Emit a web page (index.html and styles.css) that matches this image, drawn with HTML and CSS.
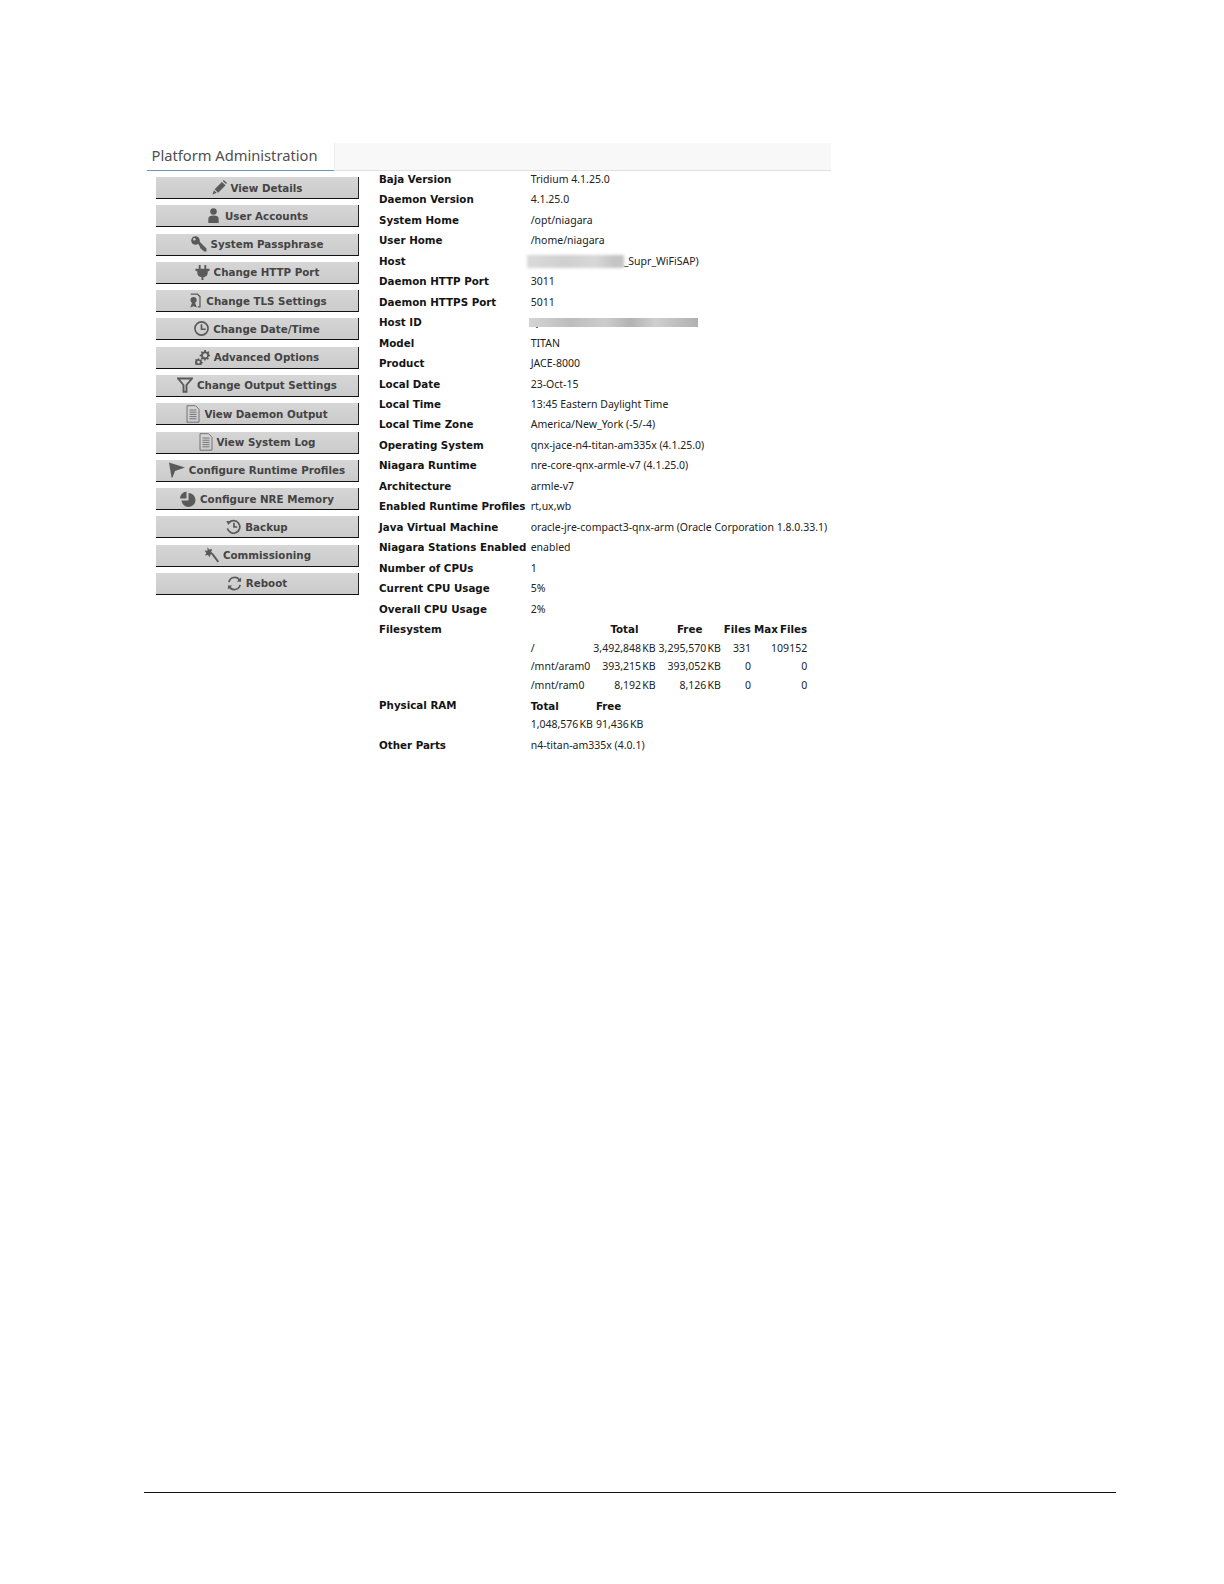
FILE: index.html
```html
<!DOCTYPE html>
<html lang="en">
<head>
<meta charset="utf-8">
<title>Platform Administration</title>
<link rel="stylesheet" href="styles.css">
</head>
<body>
<main class="panel">
  <header class="tabbar">
    <h1 class="tab">Platform Administration</h1>
    <div class="tabfill"></div>
  </header>
  <div class="content">
    <nav class="side">
      <a class="btn"><svg class="ico" viewBox="0 0 16 16"><path d="M.5 15.500l1.500-4.500 3 2.500z"/><path d="M2.800 9.800L10.500 2l4 3.500L6.500 13.500z"/><path d="M11.500 1l1-1 3.500 3.200-1 1z"/></svg>View Details</a>
      <a class="btn"><svg class="ico" viewBox="0 0 16 16"><circle cx="8" cy="3.800" r="3.500"/><path d="M2.500 16v-4.500C2.500 9 4.500 8 8 8s5.500 1 5.500 3.500V16z"/></svg>User Accounts</a>
      <a class="btn"><svg class="ico ico-wide" viewBox="0 0 16 16"><circle cx="4.500" cy="4.500" r="4.300"/><path d="M6.500 6.500l1.500-1.500 7.500 7.500V15.500H13l-1-1.200-1.200-.3-.3-1.200-1.200-.3-.3-1.500z"/><circle cx="3.300" cy="3.300" r="1.200" fill="#d0d0d0"/></svg>System Passphrase</a>
      <a class="btn"><svg class="ico" viewBox="0 0 16 16"><path d="M4 0h2v4h4V0h2v4h3.500v2L13.500 7v2.500l-1.500 2.500-3 1v3H7v-3l-3-1-1.500-2.500V7L.5 6V4H4z"/></svg>Change HTTP Port</a>
      <a class="btn"><svg class="ico" viewBox="0 0 16 16"><path d="M4 .5h7.500l3 3V15.500h-3v-1.300h1.700V4.200l-2.400-2.400H4z"/><circle cx="7" cy="7.500" r="3.300"/><path d="M3.500 15.500L5.500 10h3l2 5.500L7 14z"/></svg>Change TLS Settings</a>
      <a class="btn"><svg class="ico ico-line" viewBox="0 0 16 16"><circle cx="8" cy="8" r="7"/><path d="M8 3.500V8.800H12.500"/></svg>Change Date/Time</a>
      <a class="btn"><svg class="ico" viewBox="0 0 16 16"><path fill-rule="evenodd" d="M10 0h1.600l.3 1.500 1.200.5 1.300-.8 1 1-.8 1.300.4 1.200 1 .3v1.600l-1.500.3-.5 1.200.8 1.300-1 1-1.300-.8-1.100.4-.3 1.500H10l-.4-1.500-1.100-.4-1.300.8-1-1 .8-1.300-.5-1.200L5 6.600V5l1.500-.3.500-1.200-.8-1.300 1-1 1.300.8 1.100-.5zM10.800 3.500a2.300 2.300 0 1 0 0 4.600 2.300 2.300 0 0 0 0-4.600z"/><path fill-rule="evenodd" d="M3 9h1.500l.2 1 .9.400.9-.5.9.9-.5.900.4.900 1 .2v1.400l-1 .2-.4.900.5.800-1 .9-.8-.5-.9.400-.2 1H3l-.2-1-.9-.4-.8.500-1-.9.5-.8-.4-.9-1-.2V12.400l1-.2.4-.9-.5-.9.900-.9.900.5.900-.4zM3.800 11.500a1.500 1.500 0 1 0 0 3 1.500 1.500 0 0 0 0-3z"/></svg>Advanced Options</a>
      <a class="btn"><svg class="ico ico-line ico-funnel" viewBox="0 0 16 16"><path d="M1 1.500h14L9.500 8v6.800H6.500V8z"/></svg>Change Output Settings</a>
      <a class="btn"><svg class="ico ico-doc" viewBox="0 0 14 18"><path d="M1 .7h8.500l3.500 3.500v13H1z"/><path d="M3.500 5h7M3.500 7.200h7M3.500 9.400h7M3.500 11.600h7M3.500 13.800h7"/></svg>View Daemon Output</a>
      <a class="btn"><svg class="ico ico-doc" viewBox="0 0 14 18"><path d="M1 .7h8.500l3.500 3.500v13H1z"/><path d="M3.500 5h7M3.500 7.200h7M3.500 9.400h7M3.500 11.600h7M3.500 13.800h7"/></svg>View System Log</a>
      <a class="btn"><svg class="ico ico-wide" viewBox="0 0 16 16"><path d="M0 .5l16 5-10 3.500-2.500 6.500H2.500z"/></svg>Configure Runtime Profiles</a>
      <a class="btn"><svg class="ico ico-wide" viewBox="0 0 16 16"><path d="M8.500 2a7 7 0 1 1-7 7.500h7zM6.500 .5v7H0A7 7 0 0 1 6.500 .5z"/></svg>Configure NRE Memory</a>
      <a class="btn"><svg class="ico ico-line" viewBox="0 0 16 16"><path d="M3 4A6.700 6.700 0 1 1 1.500 10"/><path d="M8.500 4v4.500H12"/><path class="solid" d="M.3 2l5.500.5-3.300 4z"/></svg>Backup</a>
      <a class="btn"><svg class="ico ico-wide" viewBox="0 0 16 16"><path d="M4.500 0l1.500 2.500L9 2l-.7 3 2 2-2.800.5-.8 2.700L5 8 2 8.500 3.300 6 1.500 3.500l3 .3z"/><path d="M8.500 7.500l1.500-1.200 6 8-1.400 1.200z"/></svg>Commissioning</a>
      <a class="btn"><svg class="ico ico-line" viewBox="0 0 16 16"><path d="M2 6.500A6.300 6.300 0 0 1 13.500 4.500"/><path d="M14 9.500A6.300 6.300 0 0 1 2.500 11.500"/><path class="solid" d="M15 1.500v4.500h-4.500zM1 14.500v-4.500h4.500z"/></svg>Reboot</a>
    </nav>
    <table class="details">
      <tbody>
        <tr><th>Baja Version</th><td>Tridium 4.1.25.0</td></tr>
        <tr><th>Daemon Version</th><td>4.1.25.0</td></tr>
        <tr><th>System Home</th><td>/opt/niagara</td></tr>
        <tr><th>User Home</th><td>/home/niagara</td></tr>
        <tr><th>Host</th><td><span class="blur-host"></span>_Supr_WiFiSAP)</td></tr>
        <tr><th>Daemon HTTP Port</th><td>3011</td></tr>
        <tr><th>Daemon HTTPS Port</th><td>5011</td></tr>
        <tr><th>Host ID</th><td><span class="redact">Q<span class="blur-id"></span></span></td></tr>
        <tr><th>Model</th><td>TITAN</td></tr>
        <tr><th>Product</th><td>JACE-8000</td></tr>
        <tr><th>Local Date</th><td>23-Oct-15</td></tr>
        <tr><th>Local Time</th><td>13:45 Eastern Daylight Time</td></tr>
        <tr><th>Local Time Zone</th><td>America/New_York (-5/-4)</td></tr>
        <tr><th>Operating System</th><td>qnx-jace-n4-titan-am335x (4.1.25.0)</td></tr>
        <tr><th>Niagara Runtime</th><td>nre-core-qnx-armle-v7 (4.1.25.0)</td></tr>
        <tr><th>Architecture</th><td>armle-v7</td></tr>
        <tr><th>Enabled Runtime Profiles</th><td>rt,ux,wb</td></tr>
        <tr><th>Java Virtual Machine</th><td>oracle-jre-compact3-qnx-arm (Oracle Corporation 1.8.0.33.1)</td></tr>
        <tr><th>Niagara Stations Enabled</th><td>enabled</td></tr>
        <tr><th>Number of CPUs</th><td>1</td></tr>
        <tr><th>Current CPU Usage</th><td>5%</td></tr>
        <tr><th>Overall CPU Usage</th><td>2%</td></tr>
        <tr class="nested-row"><th>Filesystem</th><td>
          <table class="inner fs">
            <tr><th></th><th>Total</th><th>Free</th><th>Files</th><th>Max Files</th></tr>
            <tr><td>/</td><td>3,492,848 KB</td><td>3,295,570 KB</td><td>331</td><td>109152</td></tr>
            <tr><td>/mnt/aram0</td><td>393,215 KB</td><td>393,052 KB</td><td>0</td><td>0</td></tr>
            <tr><td>/mnt/ram0</td><td>8,192 KB</td><td>8,126 KB</td><td>0</td><td>0</td></tr>
          </table>
        </td></tr>
        <tr class="nested-row"><th>Physical RAM</th><td>
          <table class="inner ram">
            <tr><th>Total</th><th>Free</th></tr>
            <tr><td>1,048,576 KB</td><td>91,436 KB</td></tr>
          </table>
        </td></tr>
        <tr><th>Other Parts</th><td>n4-titan-am335x (4.0.1)</td></tr>
      </tbody>
    </table>
  </div>
</main>
<footer class="rule"></footer>
</body>
</html>
```

FILE: styles.css
```css
* { box-sizing: border-box; }
html, body { margin: 0; padding: 0; background: #fff; }
body {
  min-height: 1584px;
  display: flex;
  flex-direction: column;
  padding: 143px 108px 91px 144px;
  font-family: "Noto Sans", "Open Sans", sans-serif;
  color: #1d1d1d;
}
.panel { margin-left: 3px; width: 684px; }
.tabbar { display: flex; height: 28px; }
.tab {
  width: 187px;
  margin: 0;
  padding: 2px 0 0 4.500px;
  font-size: 14.700px;
  font-weight: 400;
  line-height: 20px;
  color: #4f4f4f;
  border-bottom: 1px solid #6f93b5;
  white-space: nowrap;
}
.tabfill {
  flex: 1;
  background: #f8f8f8;
  border-bottom: 1px solid #e0e0e0;
  border-left: 1px solid #ededed;
}
.content { display: flex; align-items: flex-start; }
.side {
  width: 232px;
  flex: none;
  padding: 6px 0 0 9px;
  display: flex;
  flex-direction: column;
  gap: 6.290px;
}
.btn {
  width: 203px;
  height: 22px;
  display: flex;
  align-items: center;
  justify-content: center;
  gap: 4px;
  background: linear-gradient(#d6d6d6, #cbcbcb);
  border-right: 1px solid #222;
  border-bottom: 1px solid #111;
  font-family: "DejaVu Sans", sans-serif;
  font-weight: 700;
  font-size: 10.300px;
  color: #444;
  white-space: nowrap;
}
.ico { width: 15px; height: 15px; flex: none; fill: #5a5a5a; }
.ico-wide { width: 16px; height: 16px; }
.ico-line { fill: none; stroke: #5a5a5a; stroke-width: 1.800; }
.ico-line .solid { fill: #5a5a5a; stroke: none; }
.ico-funnel { width: 16px; height: 16px; stroke-width: 1.900; }
.ico-doc { width: 14px; height: 18px; fill: none; stroke: #757575; stroke-width: 1; }
.details { border-collapse: collapse; margin-top: -2.200px; }
.details > tbody > tr { height: 20.460px; }
.details th, .details td {
  padding: 0;
  text-align: left;
  vertical-align: middle;
  white-space: nowrap;
}
.details > tbody > tr > th {
  width: 151.700px;
  font-family: "DejaVu Sans", sans-serif;
  font-size: 10.300px;
  font-weight: 700;
  color: #141414;
}
.details td { font-size: 10.500px; color: #222; }
.details > tbody > .nested-row > th,
.details > tbody > .nested-row > td {
  vertical-align: top;
  padding-top: .8px;
  padding-bottom: 1.200px;
}
.details > tbody > .nested-row > th { line-height: 18.670px; }
.inner { border-collapse: separate; border-spacing: 3px 0; margin-left: -3px; }
.inner tr { height: 18.670px; }
.inner th {
  font-family: "DejaVu Sans", sans-serif;
  font-size: 10.300px;
  font-weight: 700;
  color: #141414;
  word-spacing: -1.500px;
}
.details .inner td { word-spacing: -1.500px; }
.details .fs th { text-align: center; }
.details .fs td:nth-child(n+2) { text-align: right; }
.redact { position: relative; display: inline-block; }
.blur-host {
  display: inline-block;
  width: 97px;
  height: 13px;
  margin-left: -4px;
  vertical-align: middle;
  filter: blur(1.500px);
  background: linear-gradient(90deg, #dadada, #cfcfcf 40%, #d8d8d8 70%, #c4c4c4 90%);
}
.blur-id {
  position: absolute;
  left: -2px;
  top: 3px;
  width: 169px;
  height: 9px;
  background: linear-gradient(90deg, #d4d4d4, #bdbdbd 25%, #cdcdcd 45%, #b3b3b3 60%, #cfcfcf 75%, #b0b0b0);
}
.rule { margin-top: auto; height: 1px; background: #111; }
```
